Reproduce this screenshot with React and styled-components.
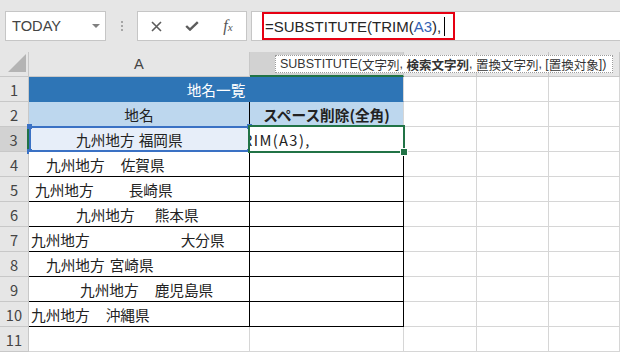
import React from 'react';
import styled, { createGlobalStyle } from 'styled-components';

const GRID = '#d6d6d6';
const HEAD_LINE = '#c8c8c8';
const GREEN = '#217346';
const RANGE_BLUE = '#3a71c4';
const BLACK = '#000';
const CJK = '"Noto Sans CJK JP", "Noto Sans", sans-serif';
const LATIN = '"Liberation Sans", Arial, sans-serif';

const Global = createGlobalStyle`
  html, body { margin: 0; padding: 0; background: #fff; }
  body { width: 620px; height: 352px; overflow: hidden; font-family: ${CJK}; }
`;

const Frame = styled.div`
  position: relative;
  width: 620px;
  height: 352px;
  overflow: hidden;
  display: flex;
  flex-direction: column;
  background: #fff;
`;

/* ---------- formula toolbar ---------- */
const Toolbar = styled.div`
  height: 52px;
  flex: none;
  display: flex;
  align-items: center;
  background: #e6e6e6;
  padding-left: 5px;
  box-sizing: border-box;
`;

const NameBox = styled.div`
  width: 101px;
  height: 30px;
  box-sizing: border-box;
  background: #fff;
  border: 1px solid #c6c6c6;
  display: flex;
  align-items: center;
  padding-left: 6px;
  font: 14.67px ${LATIN};
  color: #444;
`;

const DropArrow = styled.span`
  margin-left: auto;
  margin-right: 5px;
  width: 0;
  height: 0;
  border-left: 4px solid transparent;
  border-right: 4px solid transparent;
  border-top: 4px solid #808080;
`;

const Grip = styled.div`
  margin-left: 15px;
  width: 2px;
  display: flex;
  flex-direction: column;
  gap: 2px;
`;

const GripDot = styled.span`
  width: 2px;
  height: 2px;
  background: #a6a6a6;
`;

const ButtonBox = styled.div`
  margin-left: 14px;
  width: 110px;
  height: 30px;
  box-sizing: border-box;
  background: #fff;
  border: 1px solid #c6c6c6;
  display: flex;
  align-items: center;
`;

const IconButton = styled.span`
  width: 36px;
  height: 28px;
  display: flex;
  align-items: center;
  justify-content: center;
  color: #5c5c5c;
`;

const FxLabel = styled.span`
  font-family: "Liberation Serif", "DejaVu Serif", serif;
  font-style: italic;
  font-size: 16px;
  color: #555;
  line-height: 1;
  & > sub {
    font-size: 11px;
    vertical-align: 0;
  }
`;

const FormulaBox = styled.div`
  margin-left: 4px;
  flex: 1;
  height: 30px;
  box-sizing: border-box;
  background: #fff;
  border: 1px solid #c6c6c6;
  border-right: none;
  display: flex;
  align-items: stretch;
  padding-left: 10px;
`;

const Annotation = styled.div`
  border: 2px solid #e60012;
  display: flex;
  align-items: center;
  padding: 0 8px 0 1px;
  font: 15px ${LATIN};
  color: #262626;
  white-space: pre;
`;

const RefText = styled.span`
  color: #3462b4;
`;

const Caret = styled.span`
  width: 1px;
  height: 19px;
  background: #000;
  margin-left: 3px;
`;

/* ---------- sheet ---------- */
const Sheet = styled.div`
  display: grid;
  grid-template-columns: 29px 221px 154px 73px 72px 71px;
  grid-auto-rows: 25px;
`;

const Corner = styled.div`
  box-sizing: border-box;
  background: #e6e6e6;
  border-right: 1px solid ${HEAD_LINE};
  border-bottom: 1px solid ${HEAD_LINE};
  display: flex;
  align-items: flex-end;
  justify-content: flex-end;
  padding: 0 2px 4px 0;
`;

const ColHead = styled.div`
  box-sizing: border-box;
  background: ${p => (p.$selected ? '#d2d2d2' : '#e6e6e6')};
  border-right: 1px solid ${HEAD_LINE};
  border-bottom: ${p => (p.$selected ? `2px solid ${GREEN}` : `1px solid ${HEAD_LINE}`)};
  display: flex;
  align-items: center;
  justify-content: center;
  font: 14.67px ${LATIN};
  color: #444;
`;

const RowHead = styled.div`
  box-sizing: border-box;
  background: ${p => (p.$selected ? '#d2d2d2' : '#e6e6e6')};
  border-right: ${p => (p.$selected ? `2px solid ${GREEN}` : `1px solid ${HEAD_LINE}`)};
  border-bottom: 1px solid ${HEAD_LINE};
  display: flex;
  align-items: center;
  justify-content: center;
  font: 14.67px ${CJK};
  color: #444;
`;

const Cell = styled.div`
  position: relative;
  box-sizing: border-box;
  grid-column: span ${p => p.$span || 1};
  display: flex;
  align-items: center;
  justify-content: ${p => (p.$center ? 'center' : 'flex-start')};
  padding-left: ${p => p.$indent || 0}px;
  background: ${p => p.$fill || '#fff'};
  border-right: 1px solid ${p => p.$right || GRID};
  border-bottom: 1px solid ${p => p.$bottom || GRID};
  font-family: ${CJK};
  font-size: 14.67px;
  font-weight: ${p => (p.$bold ? 700 : 400)};
  color: ${p => p.$ink || '#222'};
  white-space: pre;
`;

const Gap = styled.span`
  display: inline-block;
  width: ${p => p.$w}px;
`;

const Clip = styled.span`
  flex: 1;
  min-width: 0;
  overflow: hidden;
  display: block;
  padding-left: 1px;
`;

const ClippedText = styled.span`
  display: inline-block;
  margin-left: -8px;
  letter-spacing: 1.4px;
`;

/* overlays: range finder & active cell */
const RangeFrame = styled.div`
  position: absolute;
  top: -1px;
  left: 0;
  right: -1px;
  bottom: -1px;
  border: 2px solid ${RANGE_BLUE};
  pointer-events: none;
`;

const Handle = styled.span`
  position: absolute;
  width: 5px;
  height: 5px;
  background: ${p => p.$color};
  ${p => (p.$top ? 'top: -4px;' : 'bottom: -4px;')}
  ${p => (p.$left ? 'left: -4px;' : 'right: -4px;')}
`;

const ActiveFrame = styled.div`
  position: absolute;
  top: -2px;
  left: -2px;
  right: -2px;
  bottom: -2px;
  border: 2px solid ${GREEN};
  pointer-events: none;
  z-index: 2;
`;

const FillHandle = styled.span`
  position: absolute;
  right: -5px;
  bottom: -5px;
  width: 6px;
  height: 6px;
  background: ${GREEN};
  border: 1px solid #fff;
`;

const Tooltip = styled.div`
  position: absolute;
  top: 55px;
  left: 275px;
  width: 338px;
  height: 18px;
  box-sizing: border-box;
  background: #fff;
  border: 1px dotted #9c9c9c;
  padding: 0 0 0 4px;
  display: flex;
  align-items: center;
  font: 12.5px ${LATIN};
  color: #333;
  white-space: pre;
  z-index: 3;
  & b {
    font-family: ${CJK};
    font-weight: 700;
  }
  & .jp {
    font-family: ${CJK};
  }
`;

const CornerTriangle = () => (
  <svg width="18" height="18" viewBox="0 0 18 18">
    <polygon points="18,0 18,18 0,18" fill="#b4b4b4" />
  </svg>
);

const CloseIcon = () => (
  <svg width="11" height="11" viewBox="0 0 11 11">
    <path d="M1 1 L10 10 M10 1 L1 10" stroke="currentColor" strokeWidth="1.6" fill="none" />
  </svg>
);

const CheckIcon = () => (
  <svg width="14" height="10" viewBox="0 0 14 10">
    <path d="M1.2 5 L5 8.6 L12.8 1.2" stroke="currentColor" strokeWidth="2.4" fill="none" />
  </svg>
);

const places = [
  { row: 3, indent: 47, gap: 4, a: '九州地方', b: '福岡県' },
  { row: 4, indent: 17, gap: 16, a: '九州地方', b: '佐賀県' },
  { row: 5, indent: 6, gap: 35, a: '九州地方', b: '長崎県' },
  { row: 6, indent: 47, gap: 20, a: '九州地方', b: '熊本県' },
  { row: 7, indent: 2, gap: 91, a: '九州地方', b: '大分県' },
  { row: 8, indent: 17, gap: 5, a: '九州地方', b: '宮崎県' },
  { row: 9, indent: 51, gap: 16, a: '九州地方', b: '鹿児島県' },
  { row: 10, indent: 2, gap: 16, a: '九州地方', b: '沖縄県' },
];

const EmptyCols = () => (
  <>
    <Cell />
    <Cell />
    <Cell />
  </>
);

export default function App() {
  return (
    <Frame>
      <Global />
      <Toolbar>
        <NameBox>
          TODAY
          <DropArrow />
        </NameBox>
        <Grip>
          <GripDot />
          <GripDot />
          <GripDot />
        </Grip>
        <ButtonBox>
          <IconButton>
            <CloseIcon />
          </IconButton>
          <IconButton>
            <CheckIcon />
          </IconButton>
          <IconButton>
            <FxLabel>
              f<sub>x</sub>
            </FxLabel>
          </IconButton>
        </ButtonBox>
        <FormulaBox>
          <Annotation>
            =SUBSTITUTE(TRIM(<RefText>A3</RefText>),
            <Caret />
          </Annotation>
        </FormulaBox>
      </Toolbar>

      <Sheet>
        <Corner>
          <CornerTriangle />
        </Corner>
        <ColHead>A</ColHead>
        <ColHead $selected />
        <ColHead />
        <ColHead />
        <ColHead />

        <RowHead>1</RowHead>
        <Cell $span={2} $center $fill="#2e75b6" $bottom="#2e75b6" $ink="#fff">
          地名一覧
        </Cell>
        <EmptyCols />

        <RowHead>2</RowHead>
        <Cell $center $fill="#bdd7ee" $right={BLACK} $bottom="#bdd7ee">
          地名
        </Cell>
        <Cell $center $bold $fill="#bdd7ee" $bottom="#bdd7ee">
          スペース削除(全角)
        </Cell>
        <EmptyCols />

        {places.map(p => {
          const active = p.row === 3;
          return (
            <React.Fragment key={p.row}>
              <RowHead $selected={active}>{p.row}</RowHead>
              <Cell
                $indent={p.indent}
                $right={BLACK}
                $bottom={BLACK}
                $fill={active ? '#e7eef9' : '#fff'}
              >
                {p.a}
                <Gap $w={p.gap} />
                {p.b}
                {active && (
                  <RangeFrame>
                    <Handle $color={RANGE_BLUE} $top $left />
                    <Handle $color={RANGE_BLUE} $top />
                    <Handle $color={RANGE_BLUE} $left />
                    <Handle $color={RANGE_BLUE} />
                  </RangeFrame>
                )}
              </Cell>
              <Cell $right={BLACK} $bottom={BLACK}>
                {active && (
                  <>
                    <Clip>
                      <ClippedText>RIM(A3),</ClippedText>
                    </Clip>
                    <ActiveFrame>
                      <FillHandle />
                    </ActiveFrame>
                  </>
                )}
              </Cell>
              <EmptyCols />
            </React.Fragment>
          );
        })}

        <RowHead>11</RowHead>
        <Cell />
        <Cell />
        <EmptyCols />
      </Sheet>

      <Tooltip>
        SUBSTITUTE(<span className="jp">文字列</span>, <b>検索文字列</b>, <span className="jp">置換文字列</span>, [<span className="jp">置換対象</span>])
      </Tooltip>
    </Frame>
  );
}
